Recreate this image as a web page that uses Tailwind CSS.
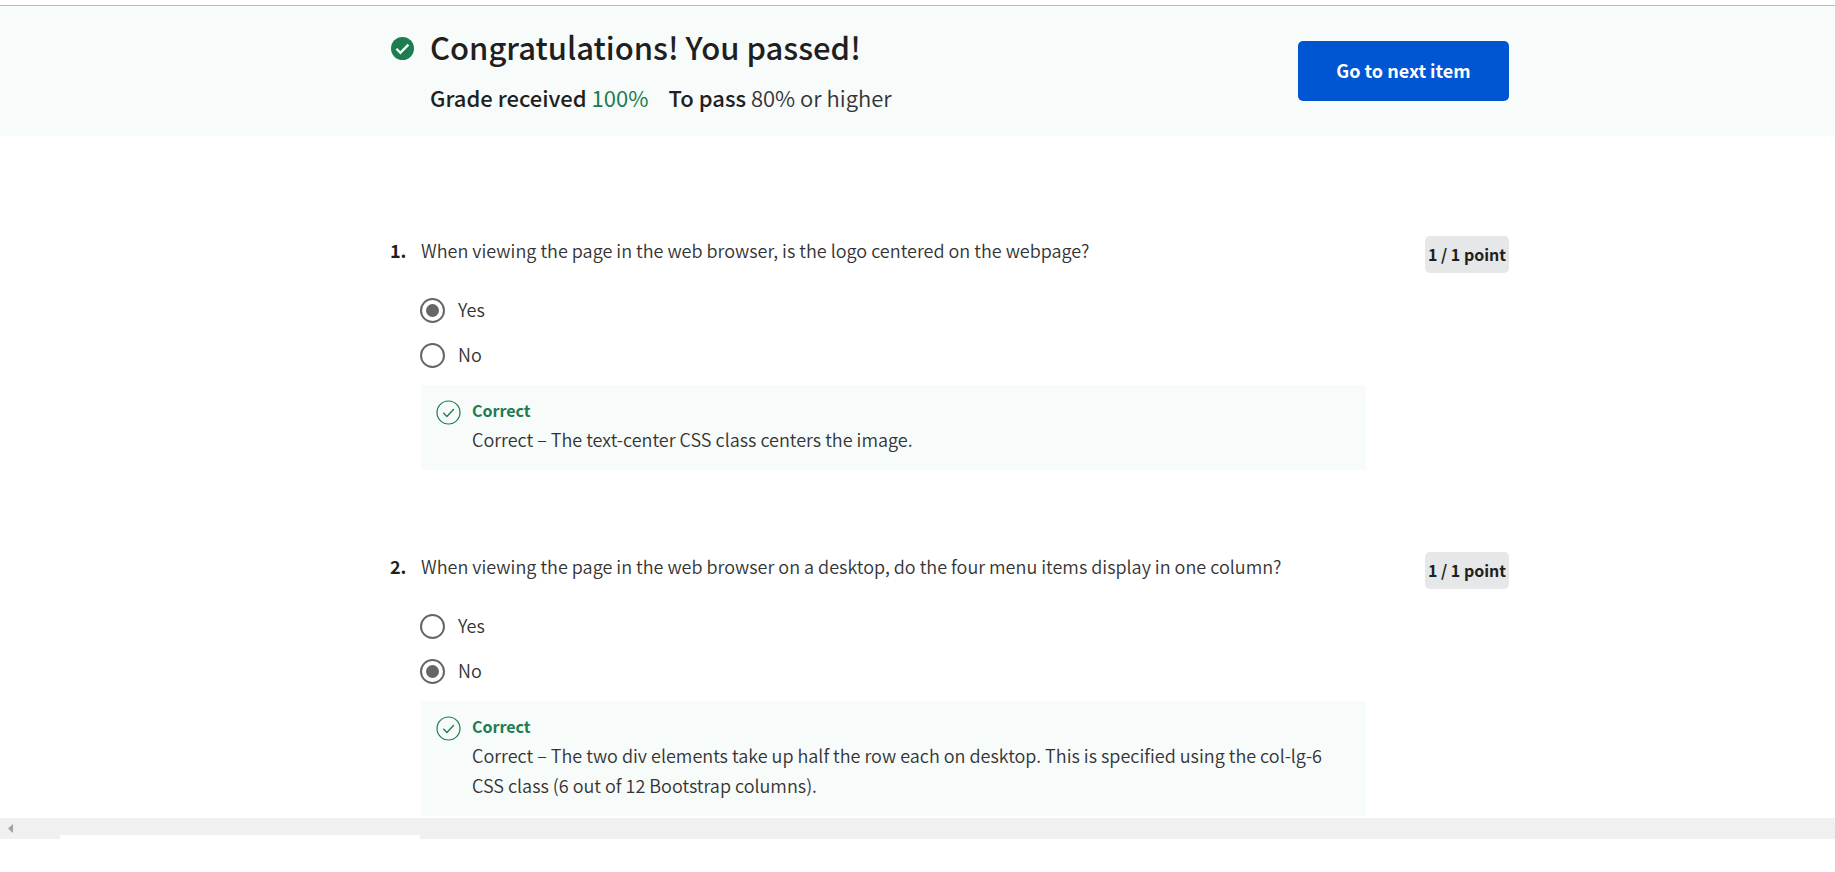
<!DOCTYPE html>
<html lang="en">
<head>
<meta charset="utf-8">
<meta name="viewport" content="width=device-width, initial-scale=1">
<title>Quiz results</title>
<script src="https://cdn.jsdelivr.net/npm/@tailwindcss/browser@4"></script>
</head>
<body class="flex min-h-screen flex-col bg-white font-['Noto_Sans_CJK_SC','Open_Sans',sans-serif] text-lg leading-[30px] font-[350] text-[#1f1f1f]">
  <header class="mt-[5px] border-t border-[#b9bdbc] bg-[#f7fbfa] pr-[326px] pl-[391px]">
    <div class="flex items-start justify-between pt-4 pb-[18px]">
      <div class="flex gap-4">
        <svg class="mt-[15px] size-[23px] shrink-0" viewBox="0 0 23 23" aria-hidden="true">
          <circle cx="11.5" cy="11.5" r="11.5" fill="#1d7c50"/>
          <path d="M5.400 11.800l4 4L17.400 7.600" fill="none" stroke="#fff" stroke-width="2.3"/>
        </svg>
        <div>
          <h1 class="text-[31px] leading-[50px] font-medium">Congratulations! You passed!</h1>
          <p class="flex gap-5 pt-1 text-[22px] leading-[42px]">
            <span><span class="font-medium">Grade received</span> <span class="font-normal text-[#1d7c50]">100%</span></span>
            <span><span class="font-medium">To pass</span> <span class="text-[#333]">80% or higher</span></span>
          </p>
        </div>
      </div>
      <button type="button" class="mt-[19px] h-[60px] w-[211px] rounded-[5px] bg-[#0056d2] pb-[2px] font-bold text-white">Go to next item</button>
    </div>
  </header>

  <main class="flex flex-col gap-[82px] pt-[100px] pr-[326px] pb-[2px] pl-[390px] text-[#333]">
    <section class="flex items-start">
      <span class="w-[31px] shrink-0 leading-7 font-bold text-[#1f1f1f]">1.</span>
      <div class="-mr-6 flex-1">
        <fieldset>
          <legend class="mb-[31px] leading-7">When viewing the page in the web browser, is the logo centered on the webpage?</legend>
          <div class="-ml-px flex flex-col gap-[15px]">
            <label class="flex h-[30px] items-center gap-[13px]"><input type="radio" name="q1" checked class="size-[25px] appearance-none rounded-full border-2 border-[#666] checked:bg-[#666] checked:bg-clip-content checked:p-1"><span class="pb-[2px]">Yes</span></label>
            <label class="flex h-[30px] items-center gap-[13px]"><input type="radio" name="q1" class="size-[25px] appearance-none rounded-full border-2 border-[#666] checked:bg-[#666] checked:bg-clip-content checked:p-1"><span class="pb-[2px]">No</span></label>
          </div>
        </fieldset>
        <div class="mt-[15px] mr-[83px] flex gap-[11px] bg-[#f7fbfa] pt-3 pr-4 pb-4 pl-[15px]">
          <svg class="mt-[3px] size-[25px] shrink-0" viewBox="0 0 25 25" fill="none" stroke="#1d7c50" aria-hidden="true">
            <circle cx="12.5" cy="12.5" r="11.5" stroke-width="1.2"/>
            <path d="M7.300 12.800l3.600 3.700 7-7.500" stroke-width="1.3"/>
          </svg>
          <div>
            <p class="text-base leading-[27px] font-bold text-[#1d7c50]">Correct</p>
            <p>Correct – The text-center CSS class centers the image.</p>
          </div>
        </div>
      </div>
      <span class="w-[84px] shrink-0 rounded-[5px] bg-[#e5e7e8] text-center text-base leading-[37px] font-bold text-[#1f1f1f]">1 / 1 point</span>
    </section>

    <section class="flex items-start">
      <span class="w-[31px] shrink-0 leading-7 font-bold text-[#1f1f1f]">2.</span>
      <div class="-mr-6 flex-1">
        <fieldset>
          <legend class="mb-[31px] leading-7">When viewing the page in the web browser on a desktop, do the four menu items display in one column?</legend>
          <div class="-ml-px flex flex-col gap-[15px]">
            <label class="flex h-[30px] items-center gap-[13px]"><input type="radio" name="q2" class="size-[25px] appearance-none rounded-full border-2 border-[#666] checked:bg-[#666] checked:bg-clip-content checked:p-1"><span class="pb-[2px]">Yes</span></label>
            <label class="flex h-[30px] items-center gap-[13px]"><input type="radio" name="q2" checked class="size-[25px] appearance-none rounded-full border-2 border-[#666] checked:bg-[#666] checked:bg-clip-content checked:p-1"><span class="pb-[2px]">No</span></label>
          </div>
        </fieldset>
        <div class="mt-[15px] mr-[83px] flex gap-[11px] bg-[#f7fbfa] pt-3 pr-4 pb-4 pl-[15px]">
          <svg class="mt-[3px] size-[25px] shrink-0" viewBox="0 0 25 25" fill="none" stroke="#1d7c50" aria-hidden="true">
            <circle cx="12.5" cy="12.5" r="11.5" stroke-width="1.2"/>
            <path d="M7.300 12.800l3.600 3.700 7-7.500" stroke-width="1.3"/>
          </svg>
          <div>
            <p class="text-base leading-[27px] font-bold text-[#1d7c50]">Correct</p>
            <p>Correct – The two div elements take up half the row each on desktop. This is specified using the col-lg-6 CSS class (6 out of 12 Bootstrap columns).</p>
          </div>
        </div>
      </div>
      <span class="w-[84px] shrink-0 rounded-[5px] bg-[#e5e7e8] text-center text-base leading-[37px] font-bold text-[#1f1f1f]">1 / 1 point</span>
    </section>
  </main>

  <!-- Horizontal scroll track -->
  <div class="flex h-[21px] flex-col justify-between bg-[#f0f0f0]">
    <svg class="mt-[6px] ml-2 h-[9px] w-[5px]" viewBox="0 0 5 9" aria-hidden="true"><path d="M5 0v9L0 4.500z" fill="#a3a3a3"/></svg>
    <div class="ml-[60px] h-1 w-[360px] bg-white"></div>
  </div>
</body>
</html>
